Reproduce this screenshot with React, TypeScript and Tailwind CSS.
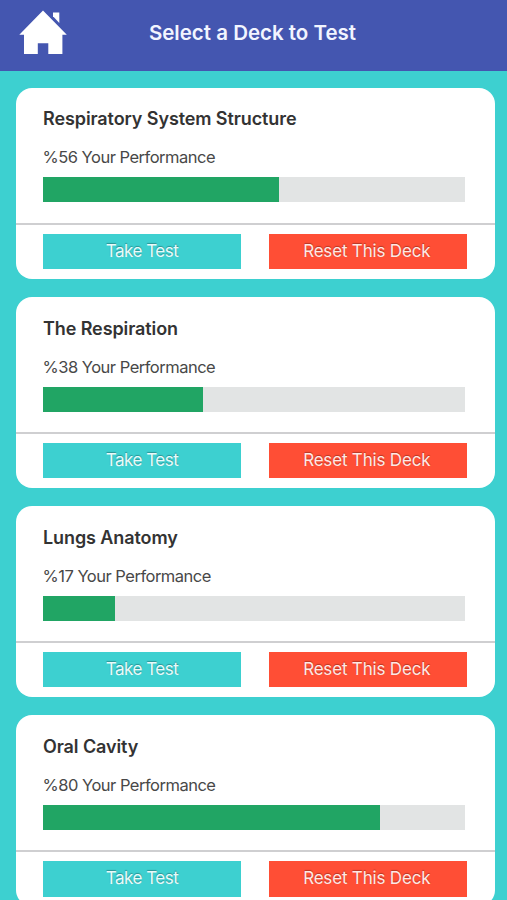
import React from "react";

interface IDeck {
    name: string;
    performance: number;
}

interface IDeckCardProps {
    deck: IDeck;
}

const decks: IDeck[] = [
    { name: "Respiratory System Structure", performance: 56 },
    { name: "The Respiration", performance: 38 },
    { name: "Lungs Anatomy", performance: 17 },
    { name: "Oral Cavity", performance: 80 },
];

function HomeIcon(): React.ReactElement {
    return (
        <svg className="w-12 h-11" viewBox="0 0 48 44" fill="#fff">
            <path d="M24 0.5 47.8 24.8H43.4V44H29.3V33.3H18.8V44H5V24.8H0.3Z" />
            <path d="M34 2.5H40.3V13L34 6.3Z" />
        </svg>
    );
}

function DeckCard({ deck }: IDeckCardProps): React.ReactElement {
    return (
        <div className="shrink-0 h-[191px] bg-white rounded-[16px]">
            <div className="h-[135px] pl-[27px] pr-[30px] pt-[20.8px]">
                <h2 className="text-[18px] leading-[22px] font-semibold tracking-[-0.1px] text-[#333]">{deck.name}</h2>
                <div className="mt-[16px] -ml-[0.5px] text-[16.5px] leading-[22px] tracking-[-0.5px] text-[#484848]">%{deck.performance} Your Performance</div>
                <div className="mt-[9.1px] h-[25px] bg-[#e2e4e4]">
                    <div className="h-full bg-[#21a564]" style={{ width: `${deck.performance}%` }} />
                </div>
            </div>
            <div className="flex justify-between border-t-2 border-[#cfcfd1] pl-[27px] pr-[27.5px] pt-[9px]">
                <button className="w-[198px] h-[35.5px] bg-[#3dd0d0] text-[17px] tracking-[-0.5px] text-[#e9fafa] [text-shadow:0_-1px_1px_rgba(0,0,0,0.3)]">Take Test</button>
                <button className="w-[198px] h-[35.5px] pr-[2.5px] bg-[#ff4e35] text-[17px] tracking-[-0.18px] text-[#ffe9e5] [text-shadow:0_-1px_1px_rgba(0,0,0,0.3)]">Reset This Deck</button>
            </div>
        </div>
    );
}

function App(): React.ReactElement {
    return (
        <div className="flex flex-col h-[900px] overflow-hidden bg-[#3dd0d0] font-['Inter',sans-serif]">
            <header className="shrink-0 grid grid-cols-[48px_1fr_48px] h-[71px] pl-[18.5px] pr-[20.5px] bg-[#4456b0]">
                <button className="self-start mt-[10px]">
                    <HomeIcon />
                </button>
                <h1 className="mt-[20px] text-center text-[20.5px] leading-[25px] font-semibold text-[#f2f5ff]">Select a Deck to Test</h1>
            </header>
            <main className="flex flex-col gap-[18.2px] pt-[16.6px] pl-[16px] pr-[12.5px]">
                {decks.map((deck) => (
                    <DeckCard key={deck.name} deck={deck} />
                ))}
            </main>
        </div>
    );
}

export default App;
